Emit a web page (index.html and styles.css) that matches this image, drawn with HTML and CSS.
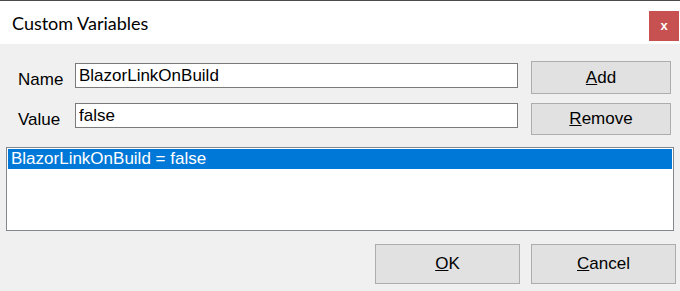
FILE: index.html
```html
<!DOCTYPE html>
<html lang="en">
<head>
    <meta charset="UTF-8">
    <title>Custom Variables</title>
    <link rel="stylesheet" href="styles.css">
</head>
<body>
    <div class="dialog">
        <div class="titlebar">
            <span class="title">Custom Variables</span>
            <button class="close-btn">x</button>
        </div>

        <div class="content">
            <div class="row row-name">
                <label class="field-label">Name</label>
                <input class="field-input" type="text" value="BlazorLinkOnBuild">
                <button class="btn btn-side btn-add"><u>A</u>dd</button>
            </div>
            <div class="row row-value">
                <label class="field-label">Value</label>
                <input class="field-input" type="text" value="false">
                <button class="btn btn-side btn-remove"><u>R</u>emove</button>
            </div>

            <ul class="var-list">
                <li class="selected">BlazorLinkOnBuild = false</li>
            </ul>

            <div class="footer">
                <button class="btn btn-footer"><u>O</u>K</button>
                <button class="btn btn-footer"><u>C</u>ancel</button>
            </div>
        </div>
    </div>
</body>
</html>
```

FILE: styles.css
```css
* {
    margin: 0;
    padding: 0;
    box-sizing: border-box;
}

body {
    width: 680px;
    height: 291px;
    overflow: hidden;
    background-color: #f0f0f0;
    font-family: 'Liberation Sans', Arial, sans-serif;
    font-size: 17px;
    color: #000;
}

.dialog {
    height: 291px;
    border-top: 1px solid #4a4a4a;
}

/* title bar */
.titlebar {
    height: 43px;
    background-color: #fff;
    display: flex;
    align-items: flex-start;
    justify-content: space-between;
}

.title {
    font-family: 'Segoe UI', 'Lato', sans-serif;
    font-size: 18px;
    padding-left: 12px;
    padding-top: 12px;
    line-height: 20px;
}

.close-btn {
    width: 30px;
    height: 30px;
    margin-top: 10px;
    margin-right: 1px;
    border: none;
    background-color: #c75050;
    color: #fff;
    font-family: 'Liberation Sans', Arial, sans-serif;
    font-weight: bold;
    font-size: 13px;
    line-height: 26px;
}

/* form */
.content {
    padding: 0 4px 0 6px;
}

.row {
    display: flex;
    align-items: flex-start;
}

.row-name {
    margin-top: 17px;
    height: 33px;
}

.row-value {
    margin-top: 9px;
    height: 32px;
}

.field-label {
    width: 69px;
    padding-left: 12px;
    line-height: 20px;
}

.row-name .field-label {
    padding-top: 9px;
}

.row-value .field-label {
    padding-top: 7px;
}

.field-input {
    width: 443px;
    height: 25px;
    border: 1px solid #7a7a7a;
    background-color: #fff;
    font-family: 'Liberation Sans', Arial, sans-serif;
    font-size: 17px;
    padding: 0 3px;
    outline: none;
}

.row-name .field-input {
    margin-top: 2px;
}

.btn {
    background-color: #e1e1e1;
    border: 1px solid #adadad;
    font-family: 'Liberation Sans', Arial, sans-serif;
    font-size: 17px;
    color: #000;
}

.btn-side {
    width: 140px;
    margin-left: 13px;
}

.btn-add {
    height: 33px;
}

.btn-remove {
    height: 32px;
}

/* list */
.var-list {
    list-style: none;
    margin-top: 12px;
    height: 84px;
    width: 668px;
    border: 1px solid #828790;
    background-color: #fff;
    padding: 1px;
}

.var-list li {
    height: 20px;
    line-height: 20px;
    padding-left: 3px;
}

.var-list li.selected {
    background-color: #0078d7;
    color: #fff;
}

/* bottom buttons */
.footer {
    display: flex;
    justify-content: flex-end;
    gap: 11px;
    margin-top: 13px;
}

.btn-footer {
    width: 145px;
    height: 40px;
}
```
